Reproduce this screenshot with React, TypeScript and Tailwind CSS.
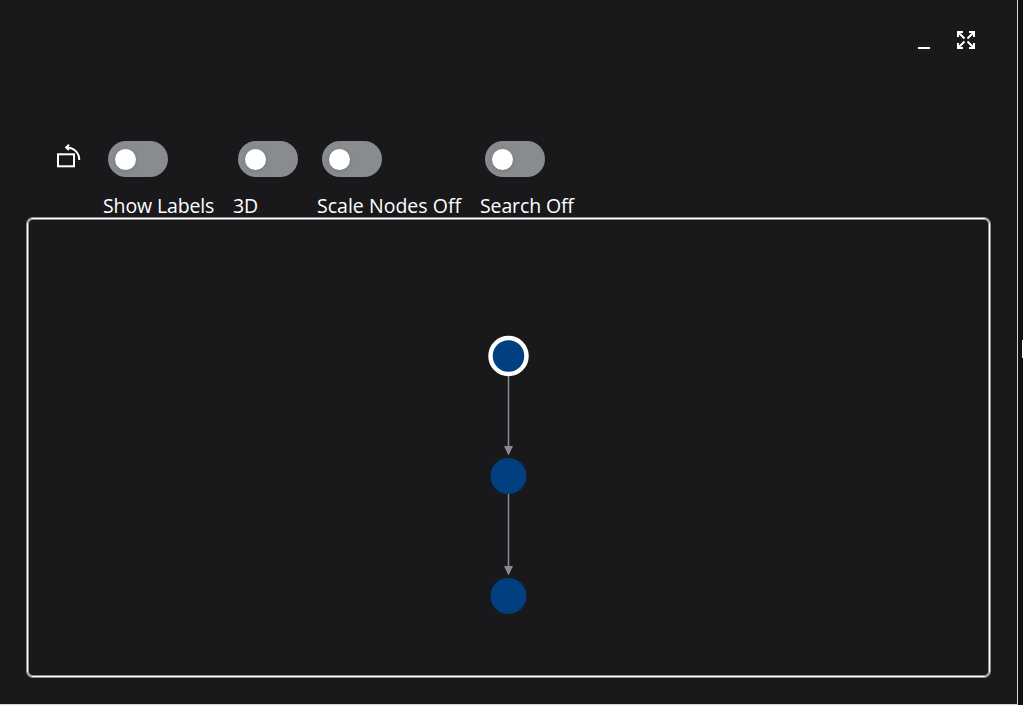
import React from "react";

type Option = { label: string; cell: string; text: string };

const options: Option[] = [
  { label: "Show Labels", cell: "w-[130px]", text: "tracking-[-0.13px]" },
  { label: "3D", cell: "w-[84px]", text: "tracking-[-0.2px]" },
  { label: "Scale Nodes Off", cell: "w-[163px]", text: "tracking-[0.02px]" },
  { label: "Search Off", cell: "w-[110px]", text: "tracking-[-0.13px]" },
];

function Toggle({ label, cell, text }: Option) {
  return (
    <div className={`flex flex-col ${cell}`}>
      <button
        role="switch"
        aria-checked={false}
        aria-label={label}
        className="ml-[5px] flex h-9 w-[60px] shrink-0 items-center rounded-full bg-[#888c8f] pl-[7px]"
      >
        <span className="mt-[0.6px] size-[21.4px] rounded-full bg-white shadow-[0_1px_5px_rgba(0,0,0,0.15)]" />
      </button>
      <span className={`mt-[15px] whitespace-nowrap text-[19.5px] leading-[28px] text-white ${text}`}>
        {label}
      </span>
    </div>
  );
}

function RotateIcon() {
  return (
    <svg width="26" height="26" viewBox="0 0 26 26" fill="none" stroke="white" strokeWidth="2">
      <rect x="3" y="11.3" width="16" height="12" />
      <path d="M11.5 4.4C18.5 4.4 24.3 9.5 24.3 17" />
      <path d="M14 1.8L11.2 4.4L14 7" />
    </svg>
  );
}

function ExpandIcon() {
  return (
    <svg width="18" height="18" viewBox="0 0 18 18" fill="none" stroke="white" strokeWidth="2">
      <path d="M1 6V1H6M12 1H17V6M17 12V17H12M6 17H1V12" />
      <path d="M1 1L7.5 7.5M17 1L10.5 7.5M17 17L10.5 10.5M1 17L7.5 10.5" />
    </svg>
  );
}

function Graph() {
  return (
    <svg className="size-full" viewBox="0 0 959 455">
      <g stroke="#888c8f" strokeWidth="1.5">
        <path d="M479.5 155V227M479.5 273V347" />
      </g>
      <path d="M475 226H484L479.5 235.5ZM475 346H484L479.5 355.5Z" fill="#888c8f" />
      <circle cx="479.5" cy="136" r="18" fill="#003f80" stroke="white" strokeWidth="4.5" />
      <circle cx="479.5" cy="256" r="18" fill="#003f80" />
      <circle cx="479.5" cy="376" r="18" fill="#003f80" />
    </svg>
  );
}

export default function App() {
  return (
    <div className="flex h-[705px] w-[1023px] overflow-hidden bg-[#111112] font-['Open_Sans','Noto_Sans',sans-serif]">
      <main className="flex h-[705px] w-[1018px] flex-col border-r border-b border-[#d4d4d4] bg-[#19191b]">
        <header className="flex h-[141px] shrink-0 justify-end pt-[31px] pr-[42px]">
          <button aria-label="Minimize" className="mt-4 mr-[27px] h-[2px] w-3 bg-white" />
          <button aria-label="Expand" className="size-[18px]">
            <ExpandIcon />
          </button>
        </header>
        <div className="flex h-[77px] shrink-0">
          <button aria-label="Rotate" className="ml-[55px] mt-[2px] mr-[22px] size-[26px] shrink-0">
            <RotateIcon />
          </button>
          {options.map((option) => (
            <Toggle key={option.label} {...option} />
          ))}
        </div>
        <section className="ml-[27px] h-[459px] w-[963px] shrink-0 rounded-[6px] border border-white p-px shadow-[0_0_0_1px_#8c8c8c,inset_0_0_0_1px_#8c8c8c]">
          <Graph />
        </section>
      </main>
      <div className="mt-[340px] ml-1 h-[18px] w-px bg-white" />
    </div>
  );
}
